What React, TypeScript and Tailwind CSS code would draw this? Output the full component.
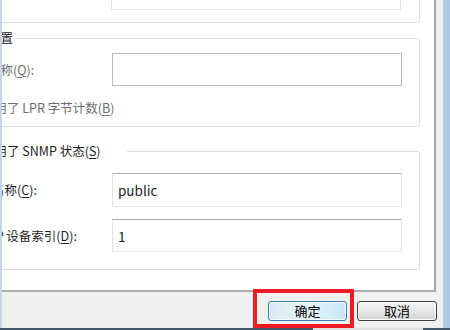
import React from "react";

const groupBorder = "border border-[#d5dfe5] rounded-[3px]";

function Key({ k }: { k: string }) {
  return (
    <>
      (<u className="underline underline-offset-2 decoration-1">{k}</u>)
    </>
  );
}

function CheckBox({ checked }: { checked?: boolean }) {
  return (
    <span className="inline-flex h-[13px] w-[13px] shrink-0 items-center justify-center border border-[#8f8f8f] bg-gradient-to-br from-[#f0f0f0] to-white">
      {checked && (
        <svg viewBox="0 0 10 10" className="h-[9px] w-[9px]">
          <path d="M1.5 5.2 L4 7.6 L8.6 2.2" fill="none" stroke="#4a5f97" strokeWidth="1.6" />
        </svg>
      )}
    </span>
  );
}

function TextBox({ value, disabled, className = "" }: { value?: string; disabled?: boolean; className?: string }) {
  const border = disabled
    ? "border border-[#b9bcbf]"
    : "border border-[#dfe3e8] border-t-[#abadb3] border-b-[#e3e9ef]";
  return (
    <div className={`flex w-[290px] shrink-0 items-center bg-white pl-[5px] text-[13.5px] text-[#1e1e1e] ${border} ${className}`}>
      {value}
    </div>
  );
}

export default function App() {
  return (
    <div className="relative flex h-[330px] w-[450px] flex-col overflow-hidden bg-[#f0f0f0] font-['Noto_Sans_CJK_SC',sans-serif] text-[12.5px] leading-[16px]">
      <div className="flex h-[328px]">
        {/* window frame left */}
        <div className="w-[2px] bg-[#c6d6e8]" />

        <div className="flex flex-1 flex-col">
          <div className="flex">
            {/* tab page */}
            <div className="flex h-[292px] w-[434px] flex-col overflow-hidden border-r-2 border-b-2 border-r-[#a3a3a3] border-b-[#adadad] bg-white">
              {/* previous group, only its bottom shows */}
              <div className={`-ml-[62px] -mt-[40px] w-[480px] shrink-0 pt-[16px] pb-[12px] pl-[170px] ${groupBorder}`}>
                <TextBox className="h-[33px] border-[#dde3e9]" />
              </div>

              {/* LPR settings */}
              <fieldset className={`-ml-[62px] mt-[7px] w-[480px] shrink-0 pl-[20px] pb-[10px] ${groupBorder}`}>
                <legend className="w-[54px] pr-[2px] text-[#1e1e1e]">
                  <span className="flex justify-end whitespace-nowrap">LPR 设置</span>
                </legend>
                <div className="mt-[7px] flex items-center">
                  <div className="w-[151px] shrink-0 text-[#6d6d6d]">
                    <span className="ml-[2px] whitespace-nowrap">队列名称<Key k="Q" />:</span>
                  </div>
                  <TextBox disabled className="h-[33px]" />
                </div>
                <div className="mt-[14px] ml-[4px] flex h-[16px] items-center gap-[4px] whitespace-nowrap text-[#6d6d6d]">
                  <CheckBox />
                  <span>启用了 LPR 字节计数<Key k="B" /></span>
                </div>
              </fieldset>

              {/* SNMP */}
              <fieldset className={`-ml-[62px] mt-[16px] w-[480px] shrink-0 pl-[20px] pb-[17px] ${groupBorder}`}>
                <legend className="w-[166px] pl-[4px] text-[#1e1e1e]">
                  <span className="flex items-center gap-[4px] whitespace-nowrap">
                    <CheckBox checked />
                    <span>启用了 SNMP 状态<Key k="S" /></span>
                  </span>
                </legend>
                <div className="mt-[14px] flex items-center text-[#1e1e1e]">
                  <div className="w-[151px] shrink-0">
                    <span className="ml-[6px] whitespace-nowrap">团体名称<Key k="C" />:</span>
                  </div>
                  <TextBox value="public" className="h-[34px]" />
                </div>
                <div className="mt-[12px] flex items-center text-[#1e1e1e]">
                  <div className="w-[151px] shrink-0">
                    <span className="ml-[8px] whitespace-nowrap">SNMP 设备索引<Key k="D" />:</span>
                  </div>
                  <TextBox value="1" className="h-[33px]" />
                </div>
              </fieldset>
            </div>
          </div>

          {/* button bar */}
          <div className="flex flex-1 justify-end gap-[10px] pt-[9px] pr-[6px] text-[13px] text-black">
            <button className="h-[20px] w-[79px] rounded-[3px] border border-[#3c7fb1] bg-gradient-to-r from-[#d9e9f3] via-[#e5f4fc] to-[#c7e6f7] leading-[18px] shadow-[inset_0_0_0_1px_#f4fbff]">
              确定
            </button>
            <button className="h-[20px] w-[80px] rounded-[3px] border border-[#3f3f3f] bg-gradient-to-b from-[#f4f4f4] via-[#e8e8e8] to-[#d3d3d3] leading-[18px] shadow-[inset_0_0_0_1px_#fbfbfb]">
              取消
            </button>
          </div>
        </div>

        {/* window frame right */}
        <div className="w-[7px] bg-gradient-to-r from-[#b4cde6] to-[#a9c6e4]" />
      </div>

      {/* bottom edge */}
      <div className="flex h-[2px]">
        <div className="w-[313px] bg-[#44586b]" />
        <div className="w-[110px] bg-[#e0e0e0]" />
        <div className="flex-1 bg-[#44586b]" />
      </div>

      {/* red highlight annotation */}
      <div className="pointer-events-none absolute left-[253px] top-[289px] h-[39px] w-[101px] border-4 border-[#ec1c24]" />
    </div>
  );
}
